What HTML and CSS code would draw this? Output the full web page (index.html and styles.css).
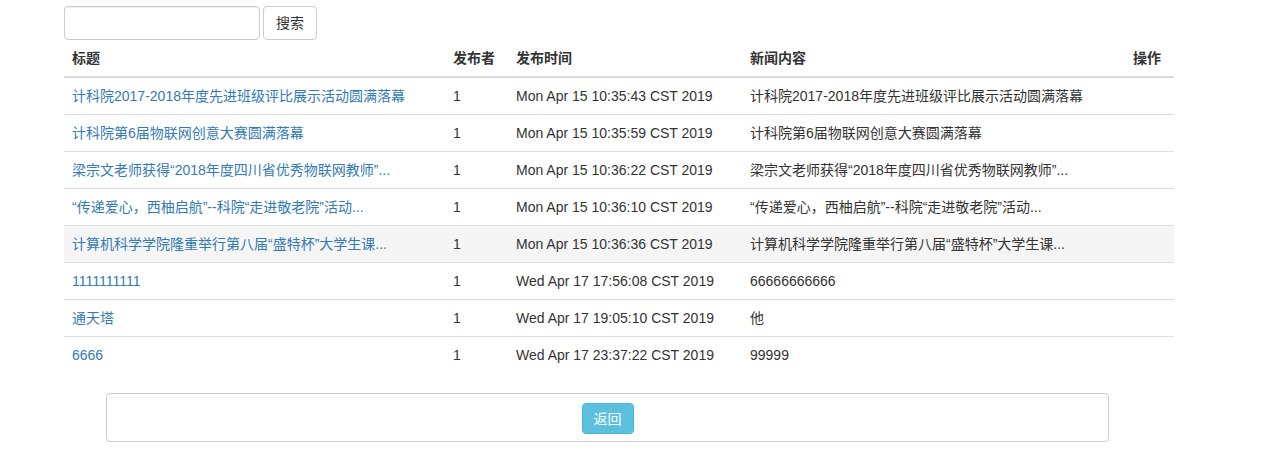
FILE: index.html
```html
<!DOCTYPE html>
<html lang="zh">
<head>
    <meta charset="UTF-8">
    <title>新闻列表</title>
    <link rel="stylesheet" href="styles.css">
</head>
<body>
    <div class="container">
        <!-- Search -->
        <form class="search-form">
            <input type="text" class="search-input">
            <button type="button" class="btn">搜索</button>
        </form>

        <!-- News table -->
        <table class="news-table">
            <thead>
                <tr>
                    <th class="col-title">标题</th>
                    <th class="col-author">发布者</th>
                    <th class="col-time">发布时间</th>
                    <th class="col-content">新闻内容</th>
                    <th class="col-op">操作</th>
                </tr>
            </thead>
            <tbody>
                <tr>
                    <td><a href="#">计科院2017-2018年度先进班级评比展示活动圆满落幕</a></td>
                    <td>1</td>
                    <td>Mon Apr 15 10:35:43 CST 2019</td>
                    <td>计科院2017-2018年度先进班级评比展示活动圆满落幕</td>
                    <td></td>
                </tr>
                <tr>
                    <td><a href="#">计科院第6届物联网创意大赛圆满落幕</a></td>
                    <td>1</td>
                    <td>Mon Apr 15 10:35:59 CST 2019</td>
                    <td>计科院第6届物联网创意大赛圆满落幕</td>
                    <td></td>
                </tr>
                <tr>
                    <td><a href="#">梁宗文老师获得“2018年度四川省优秀物联网教师”...</a></td>
                    <td>1</td>
                    <td>Mon Apr 15 10:36:22 CST 2019</td>
                    <td>梁宗文老师获得“2018年度四川省优秀物联网教师”...</td>
                    <td></td>
                </tr>
                <tr>
                    <td><a href="#">“传递爱心，西柚启航”--科院“走进敬老院”活动...</a></td>
                    <td>1</td>
                    <td>Mon Apr 15 10:36:10 CST 2019</td>
                    <td>“传递爱心，西柚启航”--科院“走进敬老院”活动...</td>
                    <td></td>
                </tr>
                <tr class="hover">
                    <td><a href="#">计算机科学学院隆重举行第八届“盛特杯”大学生课...</a></td>
                    <td>1</td>
                    <td>Mon Apr 15 10:36:36 CST 2019</td>
                    <td>计算机科学学院隆重举行第八届“盛特杯”大学生课...</td>
                    <td></td>
                </tr>
                <tr>
                    <td><a href="#">1111111111</a></td>
                    <td>1</td>
                    <td>Wed Apr 17 17:56:08 CST 2019</td>
                    <td>66666666666</td>
                    <td></td>
                </tr>
                <tr>
                    <td><a href="#">通天塔</a></td>
                    <td>1</td>
                    <td>Wed Apr 17 19:05:10 CST 2019</td>
                    <td>他</td>
                    <td></td>
                </tr>
                <tr>
                    <td><a href="#">6666</a></td>
                    <td>1</td>
                    <td>Wed Apr 17 23:37:22 CST 2019</td>
                    <td>99999</td>
                    <td></td>
                </tr>
            </tbody>
        </table>

        <!-- Footer panel -->
        <div class="panel">
            <div class="panel-heading"></div>
            <div class="panel-body">
                <button type="button" class="btn btn-info">返回</button>
            </div>
        </div>
    </div>
</body>
</html>
```

FILE: styles.css
```css
* { box-sizing: border-box; }
body {
    margin: 0;
    font-family: "Liberation Sans", Arial, "Noto Sans CJK SC", sans-serif;
    font-size: 14px;
    line-height: 1.42857143;
    color: #333;
    background-color: #fff;
}
.container {
    width: 1110px;
    margin-left: 64px;
    padding-top: 6px;
}
.search-form {
    display: flex;
    gap: 3px;
    margin: 0 0 3px 0;
}
.search-input {
    width: 196px;
    height: 34px;
    padding: 6px 12px;
    border: 1px solid #ccc;
    border-radius: 4px;
    box-shadow: inset 0 1px 1px rgba(0, 0, 0, .075);
    font-size: 14px;
}
.btn {
    display: inline-block;
    height: 34px;
    padding: 6px 12px;
    font-family: inherit;
    font-size: 14px;
    line-height: 20px;
    white-space: nowrap;
    color: #333;
    background-color: #fff;
    border: 1px solid #ccc;
    border-radius: 4px;
    cursor: pointer;
}
.news-table {
    width: 100%;
    border-collapse: collapse;
    border-spacing: 0;
    margin-bottom: 20px;
}
.news-table th,
.news-table td {
    padding: 8px;
    line-height: 20px;
    text-align: left;
    vertical-align: top;
    white-space: nowrap;
}
.news-table th {
    font-weight: bold;
    border-bottom: 2px solid #ddd;
}
.news-table td {
    border-top: 1px solid #ddd;
}
.news-table thead tr:first-child th { padding-top: 5px; }
.news-table tbody tr:first-child td { border-top: 0; }
.news-table tr.hover td { background-color: #f5f5f5; }
.col-title { width: 381px; }
.col-author { width: 63px; }
.col-time { width: 234px; }
.col-content { width: 383px; }
a {
    color: #337ab7;
    text-decoration: none;
}
.panel {
    width: 1003px;
    margin-left: 42px;
    border: 1px solid #ccc;
    border-radius: 4px;
    background-color: #fff;
}
.panel-heading {
    height: 4px;
    border-bottom: 1px solid #f3f3f3;
}
.panel-body {
    display: flex;
    justify-content: center;
    padding: 5px 0 7px;
}
.btn-info {
    height: 31px;
    padding: 5px 11px;
    color: #fff;
    background-color: #5bc0de;
    border-color: #46b8da;
}
```
